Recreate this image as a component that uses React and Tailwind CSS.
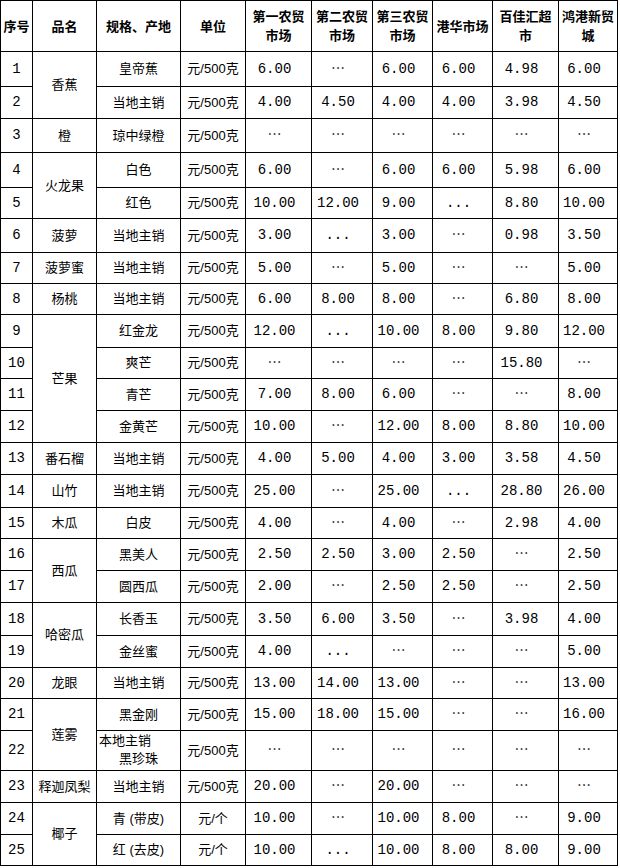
import React from 'react';

const CN = "font-['Liberation_Sans','Noto_Sans_CJK_SC',sans-serif]";
const NUM = "font-['Liberation_Mono','Noto_Sans_CJK_SC',monospace]";

const D = '⋯';
const P = '...';

const headers = [
  ['序号'],
  ['品名'],
  ['规格、产地'],
  ['单位'],
  ['第一农贸', '市场'],
  ['第二农贸', '市场'],
  ['第三农贸', '市场'],
  ['港华市场'],
  ['百佳汇超', '市'],
  ['鸿港新贸', '城'],
];

// name: [text, rowSpan] only on the first row of a group
const rows = [
  { no: 1, name: ['香蕉', 2], spec: '皇帝蕉', unit: '元/500克', p: ['6.00', D, '6.00', '6.00', '4.98', '6.00'] },
  { no: 2, spec: '当地主销', unit: '元/500克', p: ['4.00', '4.50', '4.00', '4.00', '3.98', '4.50'] },
  { no: 3, name: ['橙', 1], spec: '琼中绿橙', unit: '元/500克', p: [D, D, D, D, D, D] },
  { no: 4, name: ['火龙果', 2], spec: '白色', unit: '元/500克', p: ['6.00', D, '6.00', '6.00', '5.98', '6.00'] },
  { no: 5, spec: '红色', unit: '元/500克', p: ['10.00', '12.00', '9.00', P, '8.80', '10.00'] },
  { no: 6, name: ['菠萝', 1], spec: '当地主销', unit: '元/500克', p: ['3.00', P, '3.00', D, '0.98', '3.50'] },
  { no: 7, name: ['菠萝蜜', 1], spec: '当地主销', unit: '元/500克', p: ['5.00', D, '5.00', D, D, '5.00'] },
  { no: 8, name: ['杨桃', 1], spec: '当地主销', unit: '元/500克', p: ['6.00', '8.00', '8.00', D, '6.80', '8.00'] },
  { no: 9, name: ['芒果', 4], spec: '红金龙', unit: '元/500克', p: ['12.00', P, '10.00', '8.00', '9.80', '12.00'] },
  { no: 10, spec: '爽芒', unit: '元/500克', p: [D, D, D, D, '15.80', D] },
  { no: 11, spec: '青芒', unit: '元/500克', p: ['7.00', '8.00', '6.00', D, D, '8.00'] },
  { no: 12, spec: '金黄芒', unit: '元/500克', p: ['10.00', D, '12.00', '8.00', '8.80', '10.00'] },
  { no: 13, name: ['番石榴', 1], spec: '当地主销', unit: '元/500克', p: ['4.00', '5.00', '4.00', '3.00', '3.58', '4.50'] },
  { no: 14, name: ['山竹', 1], spec: '当地主销', unit: '元/500克', p: ['25.00', D, '25.00', P, '28.80', '26.00'] },
  { no: 15, name: ['木瓜', 1], spec: '白皮', unit: '元/500克', p: ['4.00', D, '4.00', D, '2.98', '4.00'] },
  { no: 16, name: ['西瓜', 2], spec: '黑美人', unit: '元/500克', p: ['2.50', '2.50', '3.00', '2.50', D, '2.50'] },
  { no: 17, spec: '圆西瓜', unit: '元/500克', p: ['2.00', D, '2.50', '2.50', D, '2.50'] },
  { no: 18, name: ['哈密瓜', 2], spec: '长香玉', unit: '元/500克', p: ['3.50', '6.00', '3.50', D, '3.98', '4.00'] },
  { no: 19, spec: '金丝蜜', unit: '元/500克', p: ['4.00', P, D, D, D, '5.00'] },
  { no: 20, name: ['龙眼', 1], spec: '当地主销', unit: '元/500克', p: ['13.00', '14.00', '13.00', D, D, '13.00'] },
  { no: 21, name: ['莲雾', 2], spec: '黑金刚', unit: '元/500克', p: ['15.00', '18.00', '15.00', D, D, '16.00'] },
  { no: 22, spec: null, unit: '元/500克', p: [D, D, D, D, D, D] },
  { no: 23, name: ['释迦凤梨', 1], spec: '当地主销', unit: '元/500克', p: ['20.00', D, '20.00', D, D, D] },
  { no: 24, name: ['椰子', 2], spec: '青 (带皮)', unit: '元/个', p: ['10.00', D, '10.00', '8.00', D, '9.00'] },
  { no: 25, spec: '红 (去皮)', unit: '元/个', p: ['10.00', P, '10.00', '8.00', '8.00', '9.00'] },
];

const Cell = ({ children, className = '' }) => (
  <div className={`bg-white flex items-center justify-center text-center text-black ${className}`}>
    {children}
  </div>
);

const App = () => {
  return (
    <div className="min-h-screen bg-white">
      <div className="inline-grid gap-px bg-black p-px grid-cols-[31px_63px_83px_64px_65px_60px_59px_59px_65px_58px] grid-rows-[50px_34px_31px_33px_34px_30px_33px_30px_30px_32px_30px_31px_31px_31px_32px_30px_31px_31px_32px_31px_30px_31px_39px_31px_31px_30px]">
        {headers.map((h, i) => (
          <Cell key={'h' + i} className={`${CN} font-bold text-[13px] leading-[19px] text-[#4a0a18]`}>
            <div className="flex flex-col items-center">
              {h.map((line) => (
                <span key={line}>{line}</span>
              ))}
            </div>
          </Cell>
        ))}

        {rows.map((r) => (
          <React.Fragment key={r.no}>
            <Cell className={`${NUM} text-[14px]`}>{r.no}</Cell>
            {r.name && (
              <Cell
                className={`${CN} text-[13px] ${
                  r.name[1] === 4 ? 'row-span-4' : r.name[1] === 2 ? 'row-span-2' : ''
                }`}
              >
                {r.name[0]}
              </Cell>
            )}
            {r.spec ? (
              <Cell className={`${CN} text-[13px]`}>{r.spec}</Cell>
            ) : (
              <Cell className={`${CN} text-[13px] leading-[18px] !block pt-[1px]`}>
                <div className="text-left pl-[2px]">本地主销</div>
                <div className="text-center">黑珍珠</div>
              </Cell>
            )}
            <Cell className={`${CN} text-[13px]`}>{r.unit}</Cell>
            {r.p.map((v, i) => (
              <Cell key={i} className={`${NUM} text-[14px] pr-2 ${v === D ? 'font-["DejaVu_Sans"]' : ''}`}>
                {v}
              </Cell>
            ))}
          </React.Fragment>
        ))}
      </div>
    </div>
  );
};

export default App;
